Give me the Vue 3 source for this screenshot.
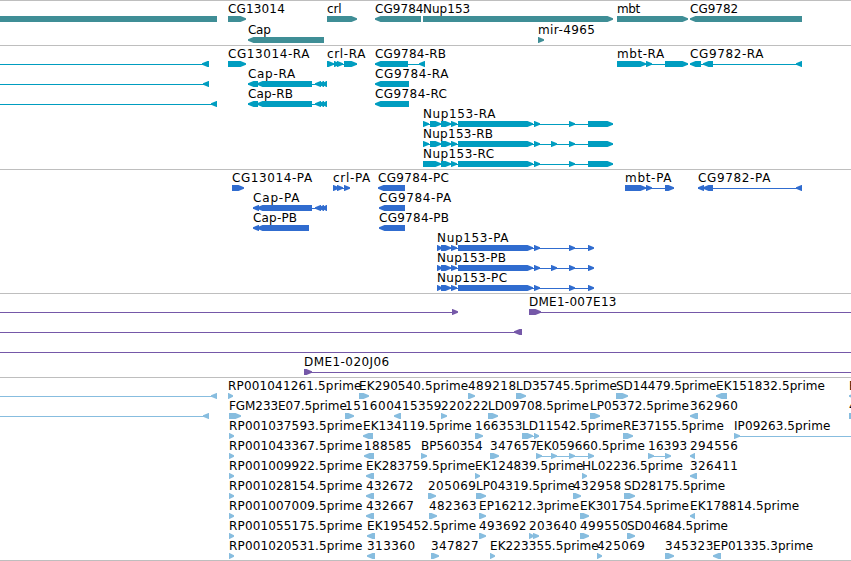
<script setup>
// label: [x, text, right edge]; feature: [start, end, direction]; line: [start, end]
const R = 1
const L = -1
const FLAT = 0

const nup = (first, extra = []) => [...first, [451, 457, R], [458, 533, R], [534, 540, R], ...extra, [569, 575, R]]
const capTail = [[315, 321, L], [319, 324, L], [322, 327, L]]
const nupRA = [[423, 429, R], [430, 441, R], [441, 451, R]]
const nupP = [[437, 442, R], [441, 451, R]]

const tracks = [
  {
    name: 'genes', height: 45, step: 21,
    rows: [
      {
        labels: [[228, 'CG13014', 284.3], [327, 'crl', 341], [375, 'CG9784', 423], [423, 'Nup153', 469.7], [617, 'mbt', 639.7], [690, 'CG9782', 737.7]],
        features: [[0, 217, FLAT], [228, 246, R], [327, 357, R], [375, 421, L], [423, 613, R], [617, 688, R], [690, 802, L]],
      },
      { labels: [[248, 'Cap', 270.3], [538, 'mir-4965', 594.5]], features: [[248, 324, L], [538, 544, R]] },
    ],
  },
  {
    name: 'transcripts', height: 124, step: 20,
    rows: [
      {
        labels: [[228, 'CG13014-RA', 309], [327, 'crl-RA', 365], [375, 'CG9784-RB', 445.5], [617, 'mbt-RA', 663.7], [690, 'CG9782-RA', 763]],
        lines: [[0, 209], [327, 357], [375, 425], [617, 688], [690, 802]],
        features: [[202, 209, L], [228, 246, R], [327, 334, R], [334, 340, R], [337, 343, R], [344, 357, R], [375, 408, L], [419, 425, L], [617, 646, R], [646, 652, R], [665, 688, R], [690, 701, L], [703, 713, L], [796, 802, L]],
      },
      {
        labels: [[248, 'Cap-RA', 294.7], [375, 'CG9784-RA', 448]],
        lines: [[0, 209], [248, 327]],
        features: [[203, 209, L], [248, 258, L], [257, 312, L], ...capTail, [375, 409, L]],
      },
      {
        labels: [[248, 'Cap-RB', 292.5], [375, 'CG9784-RC', 446.5]],
        lines: [[0, 217], [248, 327]],
        features: [[211, 217, L], [248, 258, L], [257, 312, L], ...capTail, [375, 409, L]],
      },
      { labels: [[423, 'Nup153-RA', 494.9]], lines: [[423, 613]], features: [...nup(nupRA), [588, 613, R]] },
      { labels: [[423, 'Nup153-RB', 492.6]], lines: [[423, 613]], features: [...nup(nupRA, [[551, 557, R]]), [588, 613, R]] },
      { labels: [[423, 'Nup153-RC', 493.6]], lines: [[423, 613]], features: [...nup([[423, 441, R], [441, 451, R]]), [588, 613, R]] },
    ],
  },
  {
    name: 'proteins', height: 124, step: 20,
    rows: [
      {
        labels: [[232, 'CG13014-PA', 311.6], [333, 'crl-PA', 369.8], [378, 'CG9784-PC', 448.4], [625, 'mbt-PA', 671], [698, 'CG9782-PA', 769.9]],
        lines: [[333, 349], [625, 674], [698, 802]],
        features: [[232, 244, R], [333, 339, R], [337, 343, R], [344, 350, R], [378, 405, L], [625, 646, R], [646, 652, R], [665, 674, R], [698, 704, L], [703, 713, L], [796, 802, L]],
      },
      {
        labels: [[253, 'Cap-PA', 299], [379, 'CG9784-PA', 450.8]],
        lines: [[253, 327]],
        features: [[253, 259, L], [257, 312, L], ...capTail, [379, 405, L]],
      },
      { labels: [[253, 'Cap-PB', 296.6], [379, 'CG9784-PB', 448.6]], features: [[253, 259, L], [257, 309, L], [379, 405, L]] },
      { labels: [[437, 'Nup153-PA', 508]], lines: [[437, 593]], features: [...nup(nupP), [588, 594, R]] },
      { labels: [[437, 'Nup153-PB', 505.6]], lines: [[437, 593]], features: [...nup(nupP, [[551, 557, R]]), [588, 594, R]] },
      { labels: [[437, 'Nup153-PC', 506.6]], lines: [[437, 593]], features: [...nup(nupP), [588, 594, R]] },
    ],
  },
  {
    name: 'bacs', height: 84, step: 20,
    rows: [
      { labels: [[529, 'DME1-007E13', 616]], lines: [[0, 457], [529, 851]], features: [[452, 458, R], [529, 541, R]] },
      { labels: [], lines: [[0, 522]], features: [[514, 522, L]] },
      { labels: [], lines: [[0, 851]], features: [] },
      { labels: [[304, 'DME1-020J06', 388.7]], lines: [[304, 851]], features: [[304, 312, R]] },
    ],
  },
  {
    name: 'ests', height: 183, step: 20,
    rows: [
      {
        labels: [[228, 'RP001041261.5prime', 361], [359, 'EK290540.5prime', 467.6], [468, '489218', 515.6], [516, 'LD35745.5prime', 616.5], [616, 'SD14479.5prime', 716], [716, 'EK151832.5prime', 824.5], [849, 'E', 856]],
        lines: [[0, 217]],
        features: [[211, 217, L], [228, 233, R], [359, 369, R], [468, 475, R], [516, 526, R], [616, 628, R], [716, 727, L], [849, 857, L]],
      },
      {
        labels: [[229, 'FGM233E07.5prime', 346.3], [345, '151600', 393.5], [394, '415359', 441], [441, '220222', 487.8], [488, 'LD09708.5prime', 588.4], [590, 'LP05372.5prime', 688.4], [690, '362960', 737.4], [849, '4', 856]],
        lines: [[0, 209]],
        features: [[203, 209, L], [229, 241, R], [345, 354, R], [394, 401, L], [441, 447, R], [488, 498, R], [590, 600, R], [690, 698, L], [849, 851, FLAT]],
      },
      {
        labels: [[229, 'RP001037593.5prime', 361.8], [363, 'EK134119.5prime', 471.2], [475, '166353', 521.8], [522, 'LD11542.5prime', 622.4], [623, 'RE37155.5prime', 723.4], [734, 'IP09263.5prime', 829.8]],
        lines: [[522, 539], [734, 851]],
        features: [[229, 234, R], [363, 373, L], [475, 483, R], [522, 533, R], [534, 539, R], [623, 633, R], [734, 740, R]],
      },
      {
        labels: [[229, 'RP001043367.5prime', 361.8], [364, '188585', 411], [421, 'BP560354', 482.2], [490, '347657', 536.7], [536, 'EK059660.5prime', 644.3], [648, '16393', 686.7], [690, '294556', 737.4]],
        lines: [[536, 593], [648, 670]],
        features: [[229, 234, R], [364, 374, L], [421, 427, R], [490, 499, R], [536, 542, R], [551, 557, R], [569, 575, R], [588, 594, R], [648, 654, R], [665, 671, R], [690, 695, L]],
      },
      {
        labels: [[229, 'RP001009922.5prime', 361.8], [366, 'EK283759.5prime', 474.7], [475, 'EK124839.5prime', 582.8], [582, 'HL02236.5prime', 682.3], [690, '326411', 737.4]],
        features: [[229, 234, R], [366, 374, L], [475, 480, R], [582, 587, R], [690, 697, L]],
      },
      {
        labels: [[229, 'RP001028154.5prime', 361.8], [366, '432672', 413], [428, '205069', 475.5], [476, 'LP04319.5prime', 574.6], [573, '432958', 620.7], [624, 'SD28175.5prime', 724.6]],
        features: [[229, 234, R], [366, 374, L], [428, 436, R], [476, 486, R], [573, 581, R], [624, 635, R]],
      },
      {
        labels: [[229, 'RP001007009.5prime', 361.8], [366, '432667', 413.4], [429, '482363', 476.2], [479, 'EP16212.3prime', 578.6], [580, 'EK301754.5prime', 688.4], [690, 'EK178814.5prime', 798.6]],
        features: [[229, 234, R], [366, 374, L], [429, 437, R], [479, 486, R], [580, 589, R], [690, 695, L]],
      },
      {
        labels: [[229, 'RP001055175.5prime', 361.8], [367, 'EK195452.5prime', 475.6], [479, '493692', 526], [529, '203640', 576.5], [580, '499550', 627.5], [627, 'SD04684.5prime', 727.5]],
        features: [[229, 234, R], [367, 375, L], [479, 486, R], [529, 534, R], [533, 539, R], [580, 589, R], [627, 635, R]],
      },
      {
        labels: [[229, 'RP001020531.5prime', 361.8], [367, '313360', 414.6], [431, '347827', 478.2], [490, 'EK223355.5prime', 598.2], [597, '425069', 644.5], [665, '345323', 712.8], [713, 'EP01335.3prime', 812.6]],
        features: [[229, 234, R], [367, 375, L], [431, 439, R], [490, 495, R], [597, 602, R], [665, 674, R], [713, 721, L]],
      },
    ],
  },
]

// Six pixel tall box whose leading end tapers to a blunt point
function shape([a, b, dir]) {
  const head = Math.min(6, b - a)
  if (dir === R) return `${a},15 ${b - head + 0.5},15 ${b},17.2 ${b},18.8 ${b - head + 0.5},21 ${a},21`
  if (dir === L) return `${b},15 ${a + head - 0.5},15 ${a},17.2 ${a},18.8 ${a + head - 0.5},21 ${b},21`
  return `${a},15 ${b},15 ${b},21 ${a},21`
}
</script>

<template>
  <main class="browser">
    <section v-for="t in tracks" :key="t.name" class="track" :class="t.name">
      <svg class="canvas" width="851" :height="t.height - 1">
        <g v-for="(row, i) in t.rows" :key="i" :transform="`translate(0 ${i * t.step})`">
          <rect v-for="(l, k) in row.lines" :key="'l' + k" :x="l[0]" y="18" :width="l[1] - l[0]" height="1" />
          <polygon v-for="(f, k) in row.features" :key="'f' + k" :points="shape(f)" />
          <text
            v-for="(n, k) in row.labels"
            :key="'t' + k"
            :x="n[0]"
            y="12"
            :textLength="n[2] - n[0] + 0.5"
          >{{ n[1] }}</text>
        </g>
      </svg>
    </section>
  </main>
</template>

<style>
body {
  background: #fff;
  overflow: hidden;
}
</style>

<style scoped>
.browser {
  width: 851px;
  display: flex;
  flex-direction: column;
  border-bottom: 1px solid #bebebe;
}
.track {
  border-top: 1px solid #bebebe;
}
.canvas {
  display: block;
}
.genes { fill: #3f8e96; }
.transcripts { fill: #009dc0; }
.proteins { fill: #306ccf; }
.bacs { fill: #7558a8; }
.ests { fill: #87bddf; }
text {
  font: 12px "DejaVu Sans", sans-serif;
  fill: #000;
}
</style>
